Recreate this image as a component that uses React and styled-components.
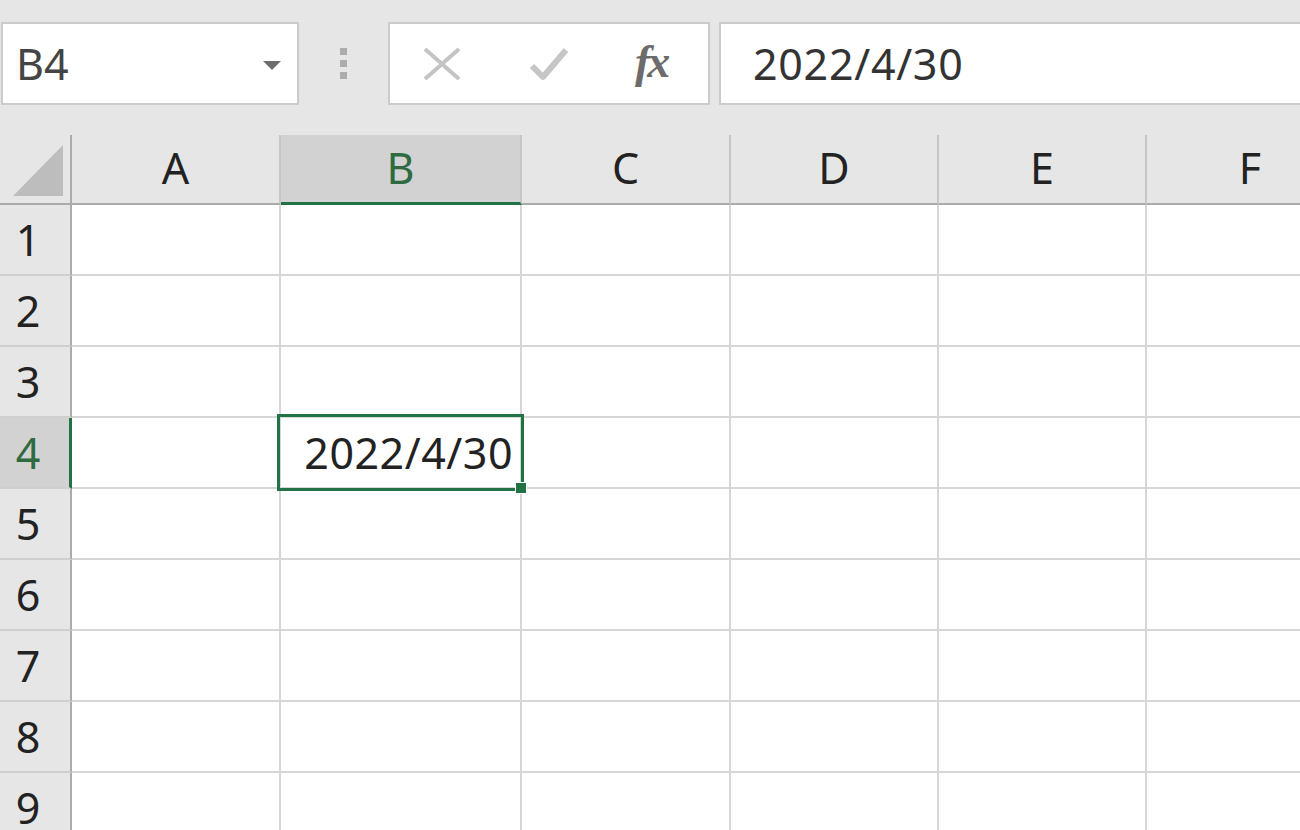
import React from "react";
import styled, { createGlobalStyle } from "styled-components";

const GREEN = "#217346";

const Global = createGlobalStyle`
  html, body { margin: 0; padding: 0; }
  body {
    background: #e6e6e6;
    font-family: "Noto Sans", "Liberation Sans", sans-serif;
    overflow: hidden;
  }
`;

const Page = styled.div`
  width: 1300px;
  height: 830px;
  overflow: hidden;
  display: flex;
  flex-direction: column;
  background: #e6e6e6;
`;

const FormulaBar = styled.div`
  height: 135px;
  flex: none;
  box-sizing: border-box;
  padding: 22px 0 0 1px;
  display: flex;
  align-items: flex-start;
`;

const Box = styled.div`
  height: 83px;
  box-sizing: border-box;
  background: #fff;
  border: 2px solid #cbcbcb;
  display: flex;
  align-items: center;
`;

const NameBox = styled(Box)`
  width: 298px;
  padding: 0 16px 0 13px;
  justify-content: space-between;
  font-size: 43px;
  color: #444;
`;

const Caret = styled.span`
  width: 0;
  height: 0;
  border-left: 9px solid transparent;
  border-right: 9px solid transparent;
  border-top: 9px solid #6e6e6e;
  margin-top: 4px;
`;

const Grip = styled.div`
  width: 89px;
  height: 83px;
  display: flex;
  flex-direction: column;
  align-items: center;
  justify-content: center;
  gap: 5px;
`;

const GripDot = styled.span`
  width: 7px;
  height: 7px;
  background: #acacac;
`;

const FxBox = styled(Box)`
  width: 322px;
  padding: 0 0 0 33px;
`;

const IconSlot = styled.div`
  width: ${(p) => p.$w}px;
  display: flex;
  align-items: center;
  justify-content: flex-start;
`;

const FxText = styled.span`
  font-family: "Liberation Serif", "DejaVu Serif", serif;
  font-style: italic;
  font-weight: bold;
  font-size: 46px;
  color: #6c6c6c;
  letter-spacing: -3px;
  line-height: 1;
  margin-top: -4px;
`;

const FormulaInput = styled(Box)`
  flex: 1;
  margin-left: 9px;
  padding-left: 32px;
  border-right: none;
  font-size: 43px;
  letter-spacing: 0.7px;
  color: #333;
`;

const Sheet = styled.div`
  display: grid;
  grid-template-columns: 72px 209px 241px 209px 208px 208px 208px;
  grid-template-rows: 70px repeat(9, 71px);
  background: #fff;
  overflow: hidden;
`;

const Corner = styled.div`
  box-sizing: border-box;
  background: #e6e6e6;
  border-right: 2px solid #ababab;
  border-bottom: 2px solid #ababab;
  display: flex;
  align-items: flex-end;
  justify-content: flex-end;
  padding: 0 7px 7px 0;
`;

const ColHead = styled.div`
  box-sizing: border-box;
  background: ${(p) => (p.$active ? "#d2d2d2" : "#e6e6e6")};
  border-right: 2px solid #c6c6c6;
  border-bottom: ${(p) => (p.$active ? `3px solid ${GREEN}` : "2px solid #ababab")};
  display: flex;
  align-items: center;
  justify-content: center;
  padding-bottom: ${(p) => (p.$active ? "3px" : "4px")};
  font-size: 43px;
  color: ${(p) => (p.$active ? "#2f6b41" : "#222")};
`;

const RowHead = styled.div`
  box-sizing: border-box;
  background: ${(p) => (p.$active ? "#d2d2d2" : "#e6e6e6")};
  border-right: ${(p) => (p.$active ? `3px solid ${GREEN}` : "2px solid #ababab")};
  border-bottom: 2px solid #cfcfcf;
  display: flex;
  align-items: center;
  justify-content: center;
  padding-right: ${(p) => (p.$active ? "13px" : "14px")};
  font-size: 43px;
  color: ${(p) => (p.$active ? "#2f6b41" : "#222")};
`;

const Cell = styled.div`
  box-sizing: border-box;
  position: ${(p) => (p.$selected ? "relative" : "static")};
  border-right: 2px solid #d6d6d6;
  border-bottom: 2px solid #d6d6d6;
  display: flex;
  align-items: center;
  justify-content: flex-end;
  padding-right: 7px;
  font-size: 43px;
  letter-spacing: 0.5px;
  color: #222;
  white-space: nowrap;
`;

const SelectionFrame = styled.span`
  position: absolute;
  left: -4px;
  top: -4px;
  right: -4px;
  bottom: -4px;
  border: 3px solid ${GREEN};
  pointer-events: none;
`;

const FillHandle = styled.span`
  position: absolute;
  right: -6px;
  bottom: -6px;
  width: 10px;
  height: 10px;
  background: ${GREEN};
  box-shadow: 0 0 0 1px #fff;
`;

const columns = ["A", "B", "C", "D", "E", "F"];
const rows = [1, 2, 3, 4, 5, 6, 7, 8, 9];
const data = { B4: "2022/4/30" };

export default function App() {
  return (
    <>
      <Global />
      <Page>
        <FormulaBar>
          <NameBox>
            <span>B4</span>
            <Caret />
          </NameBox>
          <Grip>
            <GripDot />
            <GripDot />
            <GripDot />
          </Grip>
          <FxBox>
            <IconSlot $w={106}>
              <svg width="38" height="34" viewBox="0 0 38 34">
                <path d="M2 2 L36 32 M36 2 L2 32" stroke="#c4c4c4" strokeWidth="4" fill="none" />
              </svg>
            </IconSlot>
            <IconSlot $w={106}>
              <svg width="40" height="36" viewBox="0 0 40 36">
                <path d="M3 20 L14 31 L37 4" stroke="#c6c6c6" strokeWidth="6" fill="none" strokeLinejoin="round" />
              </svg>
            </IconSlot>
            <IconSlot $w={60}>
              <FxText>fx</FxText>
            </IconSlot>
          </FxBox>
          <FormulaInput>2022/4/30</FormulaInput>
        </FormulaBar>
        <Sheet>
          <Corner>
            <svg width="50" height="51" viewBox="0 0 50 51">
              <polygon points="50,0 50,51 0,51" fill="#bdbdbd" />
            </svg>
          </Corner>
          {columns.map((c) => (
            <ColHead key={c} $active={c === "B"}>
              {c}
            </ColHead>
          ))}
          {rows.map((r) => (
            <React.Fragment key={r}>
              <RowHead $active={r === 4}>{r}</RowHead>
              {columns.map((c) => {
                const id = `${c}${r}`;
                const sel = id === "B4";
                return (
                  <Cell key={id} $selected={sel}>
                    {data[id] || ""}
                    {sel && (
                      <>
                        <SelectionFrame />
                        <FillHandle />
                      </>
                    )}
                  </Cell>
                );
              })}
            </React.Fragment>
          ))}
        </Sheet>
      </Page>
    </>
  );
}
